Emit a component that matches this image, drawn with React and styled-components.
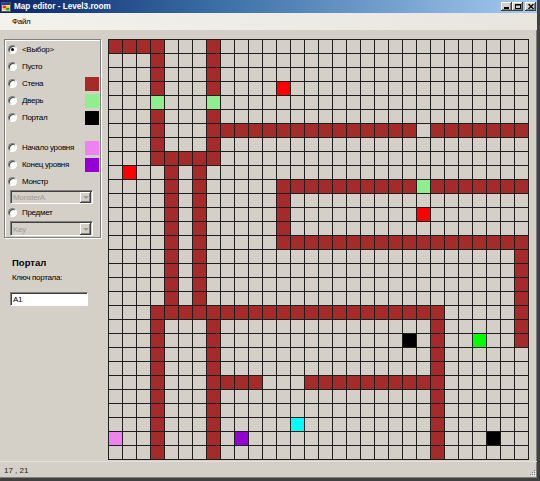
import React from 'react'
import styled, { createGlobalStyle } from 'styled-components'

const Global = createGlobalStyle`
  html, body {
    margin: 0;
    padding: 0;
    background: #3a6ea5;
  }
  body {
    font-family: "Liberation Sans", Arial, sans-serif;
    font-size: 8px;
    letter-spacing: -0.3px;
    color: #000;
  }
`;

const WALL = '#a52a2a'
const DOOR = '#90ee90'
const RED = '#ff0000'
const BLACK = '#000000'
const LIME = '#00ff00'
const CYAN = '#00ffff'
const START = '#ee82ee'
const FINISH = '#9400d3'

// level map, 30 x 30
const buildMap = () => {
  const m = Array.from({ length: 30 }, () => Array(30).fill(null))
  const h = (r, a, b) => { for (let c = a; c <= b; c++) m[r][c] = WALL }
  const v = (c, a, b) => { for (let r = a; r <= b; r++) m[r][c] = WALL }
  h(0, 0, 3)
  v(3, 0, 8)
  v(7, 0, 8)
  h(6, 8, 21)
  h(6, 23, 29)
  h(8, 3, 7)
  v(4, 8, 19)
  v(6, 8, 19)
  h(10, 12, 21)
  h(10, 23, 29)
  v(12, 10, 14)
  h(14, 12, 29)
  v(29, 14, 21)
  h(19, 3, 23)
  v(3, 19, 29)
  v(7, 19, 29)
  v(23, 19, 29)
  h(24, 7, 10)
  h(24, 14, 23)
  m[4][3] = DOOR
  m[4][7] = DOOR
  m[10][22] = DOOR
  m[3][12] = RED
  m[9][1] = RED
  m[12][22] = RED
  m[21][21] = BLACK
  m[28][27] = BLACK
  m[21][26] = LIME
  m[27][13] = CYAN
  m[28][0] = START
  m[28][9] = FINISH
  return m
}

const Window = styled.div`
  width: 537px;
  height: 478px;
  background: #d4d0c8;
  border-right: 3px solid #404040;
  border-bottom: 3px solid #404040;
  box-shadow: inset -1px 0 #808080, inset 0 -1px #808080;
  display: flex;
  flex-direction: column;
  overflow: hidden;
`;

const TitleBar = styled.div`
  height: 13px;
  display: flex;
  align-items: center;
  background: linear-gradient(to right, #0a246a, #3a6ea5 40%, #a6caf0);
  padding-left: 1px;
`;

const AppIcon = styled.svg`
  width: 10px;
  height: 10px;
  flex: none;
`;

const Title = styled.span`
  margin-left: 3px;
  color: #fff;
  font-weight: bold;
  font-size: 8.2px;
  letter-spacing: 0;
  flex: 1;
  white-space: nowrap;
`;

const CaptionButtons = styled.div`
  display: flex;
  margin-right: 1px;
`;

const CaptionButton = styled.div`
  width: 11px;
  height: 9px;
  margin-left: ${p => p.$gap || 0}px;
  background: #d4d0c8;
  box-shadow: inset -1px -1px #404040, inset 1px 1px #fff, inset -2px -2px #808080;
  display: flex;
  align-items: center;
  justify-content: center;
  svg { display: block; }
`;

const MenuBar = styled.div`
  height: 17px;
  display: flex;
  align-items: center;
  background: linear-gradient(to right, #f3f2ec, #e7e5de);
`;

const MenuItem = styled.span`
  margin-left: 12px;
`;

const Body = styled.div`
  flex: 1;
  display: flex;
  padding: 9px 0 0 4px;
  gap: 7px;
`;

const SidePanel = styled.div`
  width: 97px;
  display: flex;
  flex-direction: column;
`;

const GroupBox = styled.div`
  box-sizing: border-box;
  height: 199px;
  border: 1px solid #808080;
  box-shadow: inset 1px 1px #fff, 1px 1px #fff;
  padding-top: 1px;
  display: flex;
  flex-direction: column;
`;

const Option = styled.div`
  height: 17px;
  display: flex;
  align-items: center;
  padding-left: 3px;
  padding-right: 1px;
  margin-top: ${p => p.$mt || 0}px;
`;

const Radio = styled.span`
  box-sizing: border-box;
  width: 9px;
  height: 9px;
  border-radius: 50%;
  background: #fff;
  border: 1px solid;
  border-color: #808080 #fff #fff #808080;
  box-shadow: inset 1px 1px #404040;
  position: relative;
  flex: none;
  &::after {
    content: '';
    display: ${p => (p.$checked ? 'block' : 'none')};
    position: absolute;
    left: 2px;
    top: 2px;
    width: 3px;
    height: 3px;
    border-radius: 50%;
    background: #000;
  }
`;

const OptionLabel = styled.span`
  flex: 1;
  margin-left: 5px;
  white-space: nowrap;
`;

const Swatch = styled.span`
  width: 14px;
  height: 14px;
  background: ${p => p.$color};
  flex: none;
`;

const Combo = styled.div`
  box-sizing: border-box;
  width: 83px;
  height: ${p => p.$h || 14}px;
  margin-left: 5px;
  border: 1px solid;
  border-color: #808080 #fff #fff #808080;
  box-shadow: inset 1px 1px #404040;
  display: flex;
  align-items: center;
  padding: 1px 1px 0 2px;
`;

const ComboText = styled.span`
  flex: 1;
  color: #a09c94;
`;

const ComboButton = styled.span`
  width: 11px;
  height: 100%;
  background: #d4d0c8;
  box-shadow: inset -1px -1px #404040, inset 1px 1px #fff, inset -2px -2px #808080;
  display: flex;
  align-items: center;
  justify-content: center;
  &::after {
    content: '';
    border-left: 3px solid transparent;
    border-right: 3px solid transparent;
    border-top: 3px solid #a09c94;
  }
`;

const SectionTitle = styled.div`
  margin: 19px 0 0 8px;
  font-weight: bold;
  font-size: 9.5px;
  letter-spacing: 0;
  line-height: 12px;
`;

const FieldLabel = styled.div`
  margin: 3px 0 0 8px;
  line-height: 12px;
`;

const TextInput = styled.div`
  box-sizing: border-box;
  width: 78px;
  height: 14px;
  margin: 8px 0 0 6px;
  background: #fff;
  border: 1px solid;
  border-color: #808080 #fff #fff #808080;
  box-shadow: inset 1px 1px #404040;
  padding-left: 2px;
  display: flex;
  align-items: center;
`;

const MapGrid = styled.div`
  align-self: flex-start;
  display: grid;
  grid-template-columns: repeat(30, 13px);
  grid-auto-rows: 13px;
  gap: 1px;
  padding: 1px;
  background: #1e1e1e;
`;

const Cell = styled.div`
  background: ${p => p.$fill || '#d4d0c8'};
`;

const StatusBar = styled.div`
  height: 16px;
  border-top: 1px solid #e4e1da;
  display: flex;
  align-items: center;
  padding-left: 4px;
`;

const StatusText = styled.span`
  flex: 1;
  padding-top: 1px;
  letter-spacing: 0;
  color: #1a1a1a;
`;

const Grip = styled.svg`
  width: 8px;
  height: 10px;
  margin: 4px 1px 0 0;
  align-self: flex-end;
`;

const MAP = buildMap()

const options = [
  { label: '<Выбор>', checked: true },
  { label: 'Пусто' },
  { label: 'Стена', color: WALL },
  { label: 'Дверь', color: DOOR },
  { label: 'Портал', color: BLACK },
]

const App = () => {
  return (
    <>
      <Global />
      <Window>
        <TitleBar>
          <AppIcon viewBox="0 0 10 10">
            <rect x="0.5" y="0.5" width="9" height="9" fill="#fff" stroke="#555" strokeWidth="1" />
            <rect x="1" y="1" width="8" height="2" fill="#1c3c9c" />
            <rect x="1.5" y="3.5" width="3.5" height="2.5" fill="#e8322c" />
            <rect x="5" y="3.5" width="3.5" height="2.5" fill="#f4c430" />
            <rect x="1.5" y="6" width="3.5" height="2.5" fill="#f4c430" />
            <rect x="5" y="6" width="3.5" height="2.5" fill="#3c9c3c" />
          </AppIcon>
          <Title>Map editor - Level3.room</Title>
          <CaptionButtons>
            <CaptionButton>
              <svg width="5" height="5" viewBox="0 0 5 5"><rect x="0" y="3" width="5" height="2" fill="#000" /></svg>
            </CaptionButton>
            <CaptionButton>
              <svg width="6" height="5" viewBox="0 0 6 5"><rect x="0.5" y="0.5" width="5" height="4" fill="none" stroke="#000" /><rect x="0" y="0" width="6" height="1.5" fill="#000" /></svg>
            </CaptionButton>
            <CaptionButton $gap={2}>
              <svg width="6" height="5" viewBox="0 0 6 5"><path d="M0.5 0 L5.5 5 M5.5 0 L0.5 5" stroke="#000" strokeWidth="1.3" /></svg>
            </CaptionButton>
          </CaptionButtons>
        </TitleBar>
        <MenuBar>
          <MenuItem>Файл</MenuItem>
        </MenuBar>
        <Body>
          <SidePanel>
            <GroupBox>
              {options.map(o => (
                <Option key={o.label}>
                  <Radio $checked={o.checked} />
                  <OptionLabel>{o.label}</OptionLabel>
                  {o.color && <Swatch $color={o.color} />}
                </Option>
              ))}
              <Option $mt={13}>
                <Radio />
                <OptionLabel>Начало уровня</OptionLabel>
                <Swatch $color={START} />
              </Option>
              <Option>
                <Radio />
                <OptionLabel>Конец уровня</OptionLabel>
                <Swatch $color={FINISH} />
              </Option>
              <Option>
                <Radio />
                <OptionLabel>Монстр</OptionLabel>
              </Option>
              <Combo>
                <ComboText>MonsterA</ComboText>
                <ComboButton />
              </Combo>
              <Option>
                <Radio />
                <OptionLabel>Предмет</OptionLabel>
              </Option>
              <Combo $h={15}>
                <ComboText>Key</ComboText>
                <ComboButton />
              </Combo>
            </GroupBox>
            <SectionTitle>Портал</SectionTitle>
            <FieldLabel>Ключ портала:</FieldLabel>
            <TextInput>A1</TextInput>
          </SidePanel>
          <MapGrid>
            {MAP.map((row, r) =>
              row.map((fill, c) => <Cell key={r + '-' + c} $fill={fill} />)
            )}
          </MapGrid>
        </Body>
        <StatusBar>
          <StatusText>17 , 21</StatusText>
          <Grip viewBox="0 0 8 10">
            <g fill="#808080">
              <rect x="6" y="2" width="1" height="1" />
              <rect x="4" y="4" width="1" height="1" />
              <rect x="6" y="4" width="1" height="1" />
              <rect x="2" y="6" width="1" height="1" />
              <rect x="4" y="6" width="1" height="1" />
              <rect x="6" y="6" width="1" height="1" />
            </g>
            <g fill="#fff">
              <rect x="7" y="3" width="1" height="1" />
              <rect x="5" y="5" width="1" height="1" />
              <rect x="7" y="5" width="1" height="1" />
              <rect x="3" y="7" width="1" height="1" />
              <rect x="5" y="7" width="1" height="1" />
              <rect x="7" y="7" width="1" height="1" />
            </g>
          </Grip>
        </StatusBar>
      </Window>
    </>
  )
}

export default App
